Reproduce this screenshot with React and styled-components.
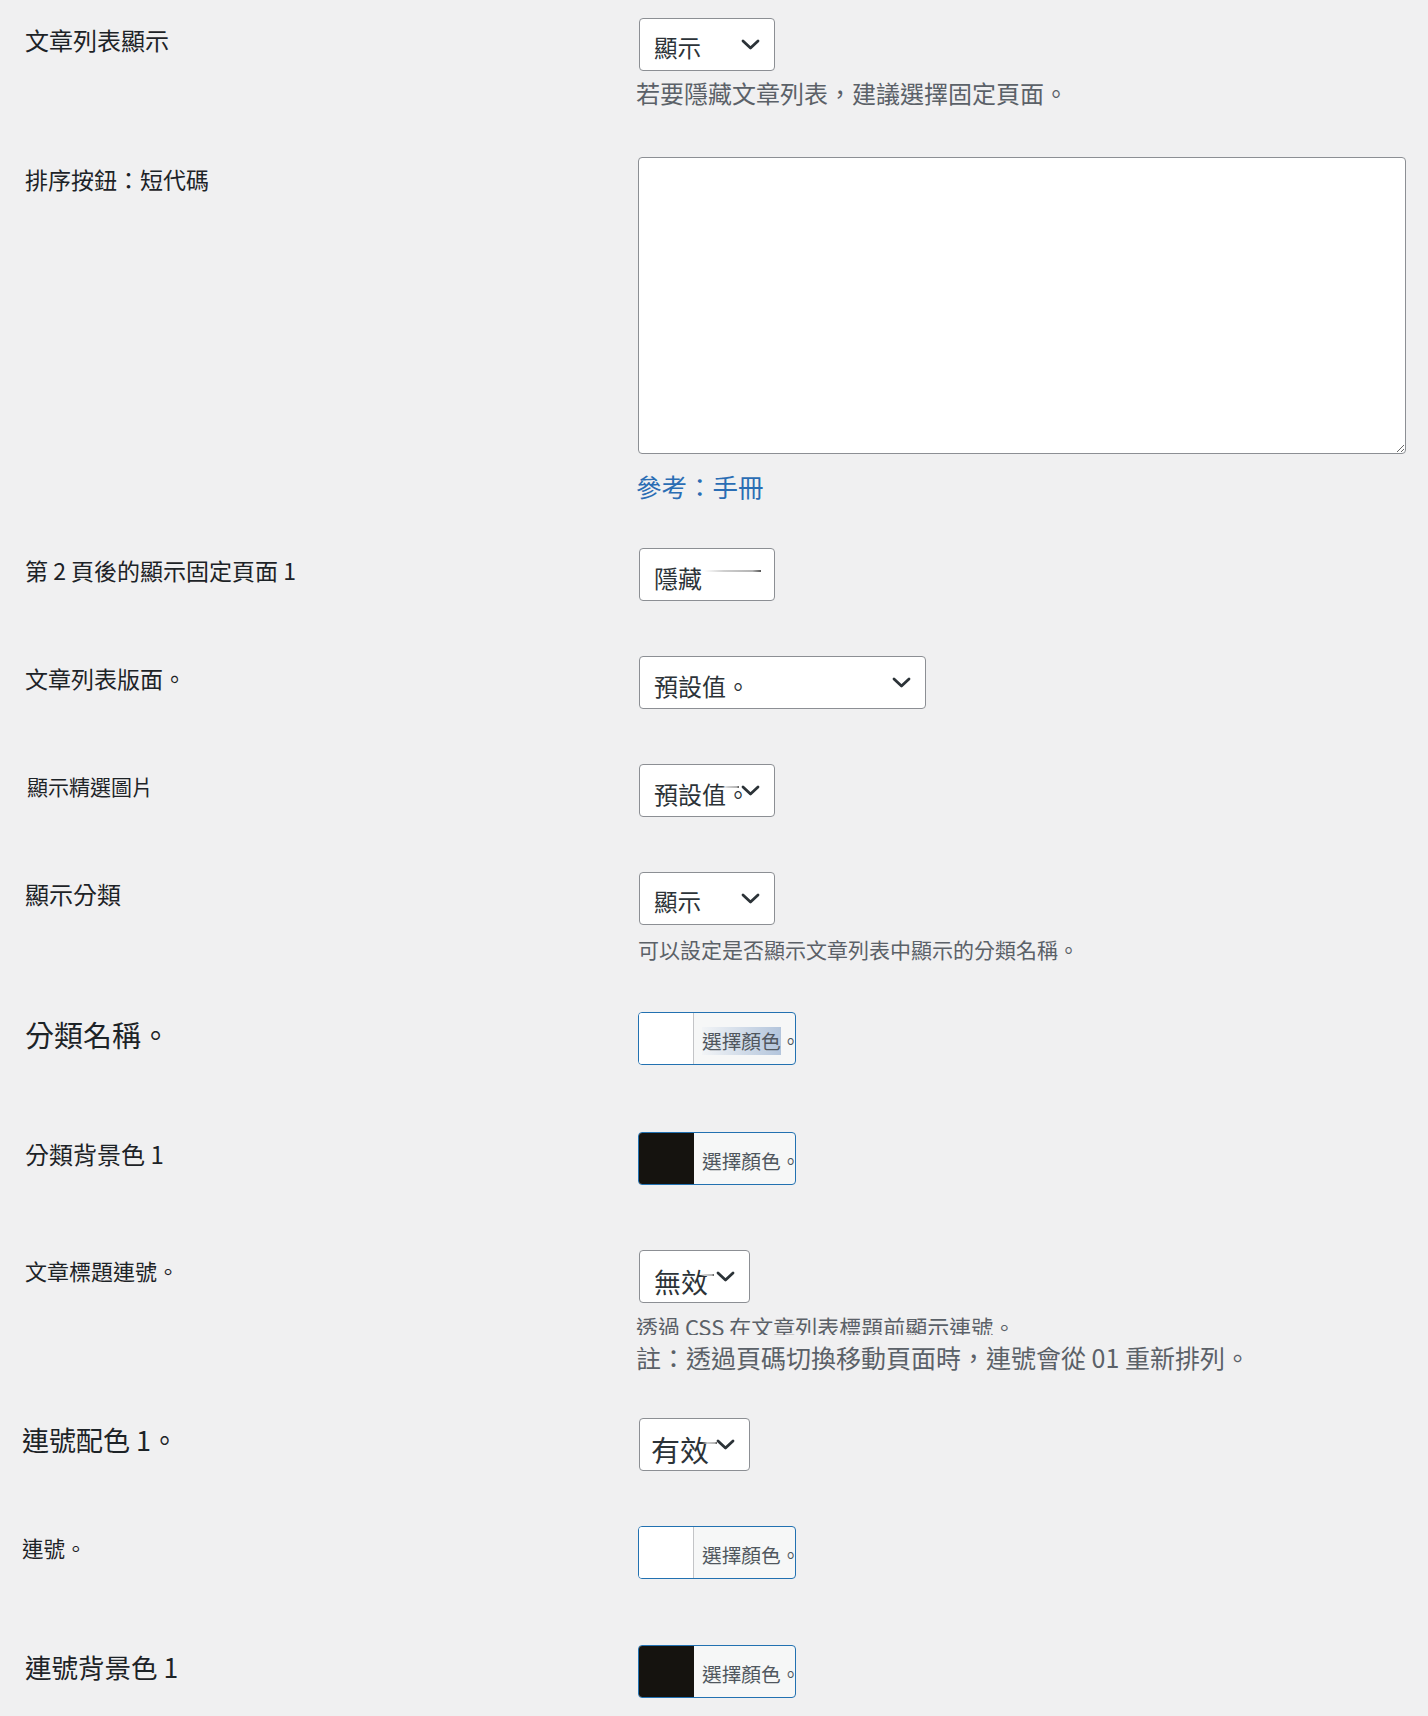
import React from 'react';
import styled, { createGlobalStyle } from 'styled-components';

const GlobalStyle = createGlobalStyle`
    html, body {
        margin: 0;
        padding: 0;
        background: #f0f0f1;
    }
    body {
        font-family: "Noto Sans CJK TC", "Noto Sans", sans-serif;
    }
`;

const Chevron = () => (
    <svg width='19' height='11' viewBox='0 0 19 11'>
        <polyline
            points='2,2 9.5,9 17,2'
            fill='none'
            stroke='#2c3338'
            strokeWidth='2.8'
            strokeLinecap='round'
            strokeLinejoin='round'
        />
    </svg>
);

const Select = ({ width, size, value, fade, inset }) => (
    <SelectBox $width={width} $size={size} $inset={inset}>
        <SelectValue>{value}</SelectValue>
        {fade && <Fade style={{ left: fade.left, top: fade.top, width: fade.width }} />}
        {!fade?.noArrow && (
            <Arrow>
                <Chevron />
            </Arrow>
        )}
    </SelectBox>
);

const ColorPicker = ({ color, selected }) => (
    <Picker>
        <Swatch $color={color} />
        <PickLabel>
            <PickText $selected={selected}>選擇顏色</PickText>。
        </PickLabel>
    </Picker>
);

export default function App() {
    return (
        <>
            <GlobalStyle />
            <Page>
                <Row $space={50}>
                    <Label $size={24}>文章列表顯示</Label>
                    <Field>
                        <Select width={136} size={23.5} value='顯示' />
                        <Hint $size={24} $top={8}>若要隱藏文章列表，建議選擇固定頁面。</Hint>
                    </Field>
                </Row>

                <Row $space={47}>
                    <Label $size={23}>排序按鈕：短代碼</Label>
                    <Field>
                        <CodeArea />
                        <DocLink href='#'>參考：手冊</DocLink>
                    </Field>
                </Row>

                <Row $space={55}>
                    <Label $size={23}>第 2 頁後的顯示固定頁面 1</Label>
                    <Field>
                        <Select
                            width={136}
                            size={24}
                            value='隱藏'
                            fade={{ left: 64, top: 21, width: 57, noArrow: true }}
                        />
                    </Field>
                </Row>

                <Row $space={55}>
                    <Label $size={23}>文章列表版面。</Label>
                    <Field>
                        <Select width={287} size={24} value='預設值。' />
                    </Field>
                </Row>

                <Row $space={55}>
                    <Label $size={21} $shift={2}>顯示精選圖片</Label>
                    <Field>
                        <Select
                            width={136}
                            size={24}
                            value='預設值。'
                            fade={{ left: 82, top: 21, width: 17 }}
                        />
                    </Field>
                </Row>

                <Row $space={51}>
                    <Label $size={24}>顯示分類</Label>
                    <Field>
                        <Select width={136} size={23.5} value='顯示' />
                        <Hint $size={21} $top={12} $flush>可以設定是否顯示文章列表中顯示的分類名稱。</Hint>
                    </Field>
                </Row>

                <Row $space={67}>
                    <Label $size={29}>分類名稱。</Label>
                    <Field>
                        <ColorPicker color='#ffffff' selected />
                    </Field>
                </Row>

                <Row $space={65}>
                    <Label $size={24}>分類背景色 1</Label>
                    <Field>
                        <ColorPicker color='#15130f' />
                    </Field>
                </Row>

                <Row $space={47}>
                    <Label $size={22} $lift={2}>文章標題連號。</Label>
                    <Field>
                        <Select
                            width={111}
                            size={27}
                            value='無效'
                            fade={{ left: 60, top: 23, width: 14 }}
                        />
                        <ClippedHint>透過 CSS 在文章列表標題前顯示連號。</ClippedHint>
                        <Hint $size={25} $top={8}>註：透過頁碼切換移動頁面時，連號會從 01 重新排列。</Hint>
                    </Field>
                </Row>

                <Row $space={55}>
                    <Label $size={27} $shift={-3}>連號配色 1。</Label>
                    <Field>
                        <Select
                            width={111}
                            size={29}
                            inset={11}
                            value='有效'
                            fade={{ left: 62, top: 23, width: 15 }}
                        />
                    </Field>
                </Row>

                <Row $space={66}>
                    <Label $size={21.5} $shift={-3}>連號。</Label>
                    <Field>
                        <ColorPicker color='#ffffff' />
                    </Field>
                </Row>

                <Row $space={0}>
                    <Label $size={26.5}>連號背景色 1</Label>
                    <Field>
                        <ColorPicker color='#15130f' />
                    </Field>
                </Row>
            </Page>
        </>
    );
}

const Page = styled.div`
    box-sizing: border-box;
    min-height: 1716px;
    padding: 17.5px 22px 17px 25px;
    background: #f0f0f1;
`;

const Row = styled.div`
    display: grid;
    grid-template-columns: 613px 1fr;
    padding-bottom: ${(p) => p.$space}px;
`;

const Label = styled.div`
    padding-top: ${(p) => 5 - (p.$lift || 0)}px;
    margin-left: ${(p) => p.$shift || 0}px;
    font-size: ${(p) => p.$size}px;
    line-height: 34px;
    color: #1d2327;
    white-space: nowrap;
`;

const Field = styled.div`
    display: flex;
    flex-direction: column;
    align-items: flex-start;
    min-width: 0;
`;

const SelectBox = styled.div`
    position: relative;
    box-sizing: border-box;
    display: flex;
    align-items: center;
    width: ${(p) => p.$width}px;
    height: 53px;
    margin-left: 1px;
    padding: ${(p) => (p.$size > 26 ? 10 : 6)}px 0 0 ${(p) => p.$inset ?? 14}px;
    border: 1px solid #8c8f94;
    border-radius: 4px;
    background: #fff;
    color: #2c3338;
    font-size: ${(p) => p.$size}px;
    overflow: hidden;
    cursor: pointer;
`;

const SelectValue = styled.span`
    white-space: nowrap;
`;

const Arrow = styled.span`
    position: absolute;
    top: 20px;
    right: 14px;
    display: flex;
`;

const Fade = styled.span`
    position: absolute;
    height: 2px;
    background: linear-gradient(90deg, rgba(210, 210, 210, 0), #cfcfcf 35%, #b4b4b4 85%, #555 100%);
`;

const Hint = styled.p`
    margin: ${(p) => p.$top}px 0 0 ${(p) => (p.$flush ? 0 : -2)}px;
    font-size: ${(p) => p.$size}px;
    line-height: ${(p) => (p.$size > 22 ? 28 : 24)}px;
    color: #5b6168;
    white-space: nowrap;
`;

const ClippedHint = styled.p`
    height: 22px;
    margin: 10px 0 0 -2px;
    overflow: hidden;
    font-size: 22px;
    line-height: 27px;
    color: #5b6168;
    white-space: nowrap;
`;

const CodeArea = styled.textarea`
    box-sizing: border-box;
    width: 100%;
    height: 297px;
    margin: 0;
    border: 1px solid #8c8f94;
    border-radius: 4px;
    background: #fff;
    font-family: "Liberation Mono", monospace;
    font-size: 16px;
    outline: none;
`;

const DocLink = styled.a`
    margin: 17px 0 0 -2px;
    font-size: 25.5px;
    line-height: 30px;
    color: #2a6db4;
    text-decoration: none;
`;

const Picker = styled.div`
    box-sizing: border-box;
    display: flex;
    width: 158px;
    height: 53px;
    border: 1px solid #2271b1;
    border-radius: 4px;
    overflow: hidden;
    background: #f6f7f7;
`;

const Swatch = styled.span`
    flex: 0 0 54px;
    background: ${(p) => p.$color};
    border-right: 1px solid ${(p) => (p.$color === '#ffffff' ? '#c3c4c7' : p.$color)};
`;

const PickLabel = styled.span`
    display: flex;
    align-items: center;
    padding: 5px 0 0 8px;
    font-size: 19.7px;
    color: #50575e;
    white-space: nowrap;
`;

const PickText = styled.span`
    line-height: 28px;
    background: ${(p) =>
        p.$selected ? 'linear-gradient(90deg, rgba(236, 240, 245, 0.4), #b3c5dc)' : 'transparent'};
`;
